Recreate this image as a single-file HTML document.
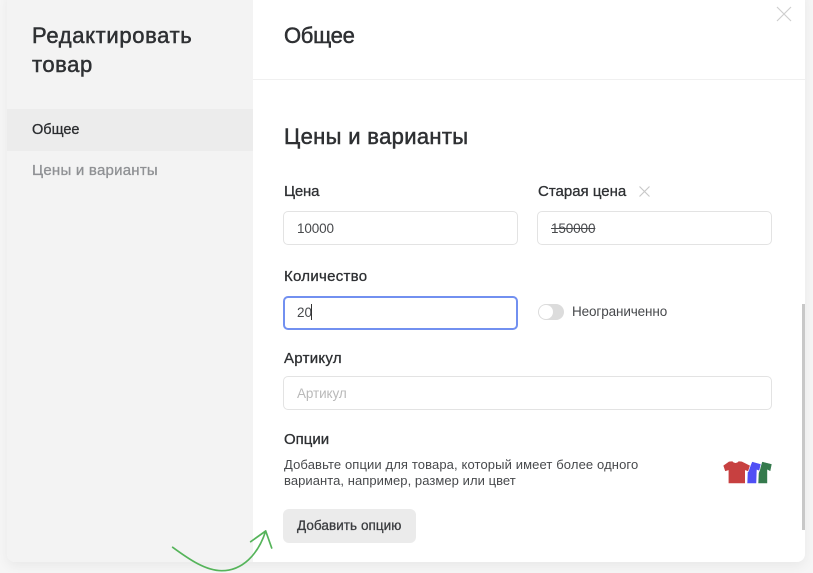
<!DOCTYPE html>
<html><head><meta charset="utf-8">
<style>
html,body{margin:0;padding:0}
body{width:813px;height:573px;overflow:hidden;position:relative;background:#f6f6f6;font-family:"Liberation Sans","DejaVu Sans",sans-serif;color:#2e3033}
.modal{position:absolute;left:7px;top:-10px;width:798px;height:572px;background:#fff;border-radius:8px;box-shadow:0 4px 12px rgba(0,0,0,.06)}
.side{position:absolute;left:7px;top:0;width:246px;height:562px;background:#f3f3f3;border-bottom-left-radius:8px}
.act{position:absolute;left:7px;top:109px;width:246px;height:42px;background:#ececec}
.t{position:absolute;white-space:nowrap;line-height:1}
.m{-webkit-text-stroke:.3px currentColor}
.h{-webkit-text-stroke:.5px currentColor}
.in{position:absolute;box-sizing:border-box;height:34px;width:235px;background:#fff;border:1.3px solid #e3e3e3;border-radius:5px}
</style></head><body>
<div class="modal"></div>
<div class="side"></div>
<div class="act"></div>
<div style="position:absolute;left:253px;top:79px;width:552px;height:1px;background:#f0f0f0"></div>

<div class="t h" style="left:32px;top:25px;font-size:22px;letter-spacing:.65px">Редактировать</div>
<div class="t h" style="left:32px;top:54px;font-size:22px;letter-spacing:.55px">товар</div>
<div class="t m" style="left:32px;top:123px;font-size:14.5px;color:#2b2d30;letter-spacing:0">Общее</div>
<div class="t m" style="left:32px;top:163px;font-size:15px;letter-spacing:.24px;color:#8f9194">Цены и варианты</div>

<div class="t h" style="left:284px;top:25px;font-size:22px;letter-spacing:-.3px">Общее</div>
<div class="t h" style="left:284px;top:126px;font-size:22px;letter-spacing:.33px">Цены и варианты</div>

<div class="t m" style="left:284px;top:184px;font-size:15px;letter-spacing:-.2px">Цена</div>
<div class="in" style="left:283px;top:211px"></div>
<div class="t" style="left:297px;top:222px;font-size:13.5px;letter-spacing:-.12px;color:#47494c">10000</div>

<div class="t m" style="left:538px;top:184px;font-size:15px">Старая цена</div>
<svg style="position:absolute;left:638px;top:185px" width="13" height="13" viewBox="0 0 13 13"><path d="M1.500 1.500L11.500 11.500M11.500 1.500L1.500 11.500" stroke="#c9c9c9" stroke-width="1.200" fill="none"/></svg>
<div class="in" style="left:537px;top:211px"></div>
<div class="t" style="left:551px;top:222px;font-size:13.5px;letter-spacing:-.12px;color:#47494c;text-decoration:line-through">150000</div>

<div class="t m" style="left:284px;top:269px;font-size:15px;letter-spacing:.28px">Количество</div>
<div class="in" style="left:283px;top:296px;height:33.500px;border:2px solid #7290f0"></div>
<div class="t" style="left:297px;top:306px;font-size:13.5px;color:#47494c">20</div>
<div style="position:absolute;left:311px;top:304px;width:1px;height:16px;background:#333"></div>

<div style="position:absolute;left:538px;top:304px;width:26px;height:16px;border-radius:8px;background:#dcdcdc"></div>
<div style="position:absolute;left:539px;top:305px;width:14px;height:14px;border-radius:7px;background:#fff"></div>
<div class="t" style="left:572px;top:305px;font-size:13.5px;letter-spacing:-.12px;color:#47494c">Неограниченно</div>

<div class="t m" style="left:284px;top:351px;font-size:15px;letter-spacing:.28px">Артикул</div>
<div class="in" style="left:283px;top:376px;width:489px"></div>
<div class="t" style="left:297px;top:387px;font-size:13.5px;letter-spacing:-.1px;color:#b9b9b9">Артикул</div>

<div class="t m" style="left:284px;top:432px;font-size:15px">Опции</div>
<div class="t" style="left:284px;top:458px;font-size:13px;color:#47494c;letter-spacing:.12px">Добавьте опции для товара, который имеет более одного</div>
<div class="t" style="left:284px;top:474px;font-size:13px;color:#47494c;letter-spacing:.06px">варианта, например, размер или цвет</div>

<svg style="position:absolute;left:722px;top:459px" width="54" height="26" viewBox="0 0 54 26">
<path d="M40 2.500L50 5L48.500 12.500L45.500 11V24.500H36L36.500 14Z" fill="#357a4d" stroke="#fff" stroke-width=".6"/>
<path d="M30 2.500L39 5L37.500 12L35 11L34.500 24.500H25L25.500 13Z" fill="#5050f5" stroke="#fff" stroke-width=".6"/>
<path d="M7 2.300L10.500 2C12 4.200 15 4.200 16.500 2L20 2.300L28.300 6.500L26.300 12.500L23.300 11.500V24.500H6.300V11.500L3 12.500L1 6.500Z" fill="#c74040" stroke="#fff" stroke-width=".6"/>
</svg>

<div style="position:absolute;left:283px;top:509px;width:133px;height:34px;background:#ebebeb;border-radius:6px"></div>
<div class="t m" style="left:297px;top:519px;font-size:13.5px;color:#3a3c3f;letter-spacing:.06px">Добавить опцию</div>

<div style="position:absolute;left:802px;top:304px;width:3px;height:226px;background:#c8c8c8"></div>

<svg style="position:absolute;left:776px;top:6px" width="16" height="16" viewBox="0 0 16 16"><path d="M1 1L15 15M15 1L1 15" stroke="#cfcfcf" stroke-width="1.200" fill="none"/></svg>

<svg style="position:absolute;left:170px;top:525px" width="105" height="48" viewBox="0 0 105 48">
<path d="M2.700 22.300C20 35 36 45.700 51.700 45.700C72 45.700 88 30 95.700 6" stroke="#55b45a" stroke-width="1.700" fill="none" stroke-linecap="round"/>
<path d="M80.700 16.700L95.700 6L101.700 23" stroke="#55b45a" stroke-width="1.700" fill="none" stroke-linecap="round" stroke-linejoin="round"/>
</svg>
</body></html>
